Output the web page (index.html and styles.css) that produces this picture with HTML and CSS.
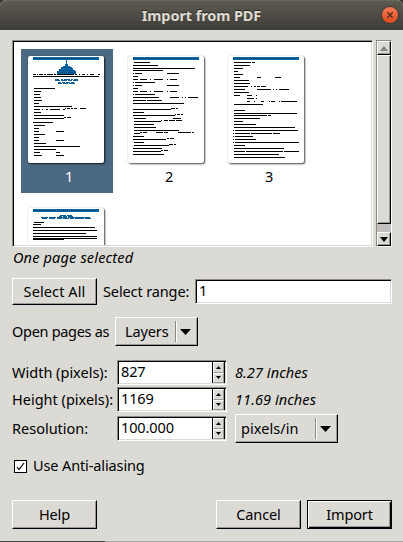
FILE: index.html
```html
<!DOCTYPE html>
<html lang="en">
<head>
<meta charset="utf-8">
<title>Import from PDF</title>
<link rel="stylesheet" href="styles.css">
</head>
<body>
<div class="window">
  <header class="titlebar">
    <h1>Import from PDF</h1>
    <button class="close" aria-label="Close"><svg width="8" height="8" viewBox="0 0 8 8"><path d="M1.3 1.3l5.4 5.4M6.7 1.3L1.3 6.7"/></svg></button>
  </header>
  <main>
    <section class="browser">
      <div class="pages">
        <figure class="page selected">
          <svg class="paper" viewBox="0 0 76 107">
            <path class="blue" d="M5 1h66v3H5zM38 4h1v4h1v2h2v1h2v1h1v2h2v1h1v3H29v-3h2v-2h2v-2h2v-1h2V8h1z"/>
            <path class="dither" d="M5 2.5h66M34 11.5h10M31 14.5h16M30 16.5h18"/>
            <path class="ink" d="M5 18.5h3m1 0h1m1 0h4m1 0h2m1 0h6m1 0h2m1 0h17m1 0h2m2 0h1m2 0h3m2 0h1m2 0h4m4 0h2M5 20.5h66M6 32.5h21M6 35.5h7M6 38.5h6M6 41.5h7M6 44.5h8M6 47.5h5M6 50.5h38M37 52.5h1m1 0h3m1 0h2m1 0h3m3 0h6M6 53.5h6m2 0h1m3 0h2m2 0h10m3 0h2M6 56.5h7M6 59.5h30M36 61.5h2m1 0h4M6 62.5h30M5 66.5h20M6 69.5h11M6 72.5h5M6 75.5h5M28 75.5h8M6 78.5h11M6 81.5h5M6 84.5h5M28 84.5h8M6 87.5h12M6 90.5h46M6 93.5h22M6 96.5h6M28 96.5h4M6 99.5h8M28 99.5h8"/>
            <path class="bluetext" d="M27 23.5h4m2 0h2m1 0h6m1 0h2m1 0h4M27 24.5h5m1 0h6m1 0h4m1 0h5M30 26.5h3m1 0h3m1 0h4m1 0h3M30 27.5h4m1 0h5m1 0h6"/>
          </svg>
          <figcaption>1</figcaption>
        </figure>
        <figure class="page">
          <svg class="paper" viewBox="0 0 76 107">
            <path class="blue" d="M5 1h66v3H5z"/><path class="dither" d="M5 2.5h66"/>
            <path class="ink" d="M6 6.5h16M5 9.5h25M5 12.5h62M5 14.5h30M5 17.5h1m1 0h7M39 17.5h12M5 20.5h5M5 23.5h5m2 0h7m3 0h1m3 0h9m4 0h1m2 0h7M5 26.5h1m1 0h20M5 29.5h1m1 0h7M39 29.5h12M5 32.5h5M5 35.5h5m2 0h7m3 0h1m3 0h9m4 0h1m2 0h7M5 38.5h1m1 0h20M5 41.5h26M42 41.5h9m3 0h1m2 0h1m2 0h10M5 44.5h13m1 0h15M5 47.5h51M43 52.5h4m1 0h2M5 53.5h38M5 56.5h11M47 58.5h1m1 0h3m1 0h2M5 59.5h42M6 62.5h12M45 62.5h8M33 64.5h1m2 0h4m1 0h6m1 0h6M6 65.5h27M6 68.5h20M6 71.5h22M6 74.5h45M12 76.5h2m1 0h4M28 76.5h7m1 0h4M50 76.5h13m1 0h2M6 77.5h6M5 80.5h11M39 82.5h2m1 0h4M5 83.5h33M6 86.5h10M41 88.5h4m1 0h2M6 89.5h35M5 92.5h29M33 94.5h2m1 0h4M5 95.5h28M5 98.5h31"/>
          </svg>
          <figcaption>2</figcaption>
        </figure>
        <figure class="page">
          <svg class="paper" viewBox="0 0 76 107">
            <path class="blue" d="M5 1h66v3H5z"/><path class="dither" d="M5 2.5h66"/>
            <path class="ink" d="M6 6.5h17m1 0h3M6 9.5h16M6 12.5h9M6 15.5h4M6 18.5h9M6 21.5h6M29 21.5h4M47 21.5h6M6 24.5h15M6 27.5h16M6 30.5h14m3 0h1m2 0h2m1 0h3m1 0h5M6 33.5h11M29 33.5h14m2 0h1m2 0h1m2 0h10M6 36.5h15M6 39.5h6M19 39.5h5M28 39.5h1M19 42.5h7m2 0h1M19 45.5h3m4 0h1m6 0h3m5 0h1m1 0h4m4 0h1m1 0h16M6 48.5h29M6 54.5h11M6 57.5h63M6 59.5h33m1 0h3M6 62.5h26M6 65.5h9M6 68.5h22M6 71.5h61M5 74.5h1m1 0h63M5 77.5h1m1 0h15m1 0h21m1 0h7M5 80.5h1m1 0h18M5 83.5h1m1 0h21M5 86.5h1m1 0h64M6 89.5h11M6 92.5h50M6 95.5h11m1 0h37m1 0h15M6 98.5h45M6 101.5h51"/>
          </svg>
          <figcaption>3</figcaption>
        </figure>
        <figure class="page">
          <svg class="paper" viewBox="0 0 76 107">
            <path class="blue" d="M5 1h66v3H5z"/><path class="dither" d="M5 2.5h66"/>
            <path class="bluetext" d="M32 7.5h6m1 0h5M31 8.5h3m1 0h4m1 0h5M13 9.5h7m1 0h7m1 0h10m1 0h22M14 10.5h5m2 0h6m2 0h5m1 0h6m1 0h4m1 0h9m1 0h6"/>
            <path class="ink" d="M6 14.5h10M5 16.5h8M5 19.5h62M5 22.5h64M5 25.5h53M5 28.5h64M5 30.5h64M5 31.5h31"/>
          </svg>
        </figure>
      </div>
      <div class="scrollbar">
        <span class="step"><svg width="8" height="5" viewBox="0 0 8 5"><path fill="#85837d" d="M4 0L8 5H0z"/></svg></span>
        <span class="slider"></span>
        <span class="step"><svg width="8" height="5" viewBox="0 0 8 5"><path d="M0 0h8L4 5z"/></svg></span>
      </div>
    </section>
    <p class="status">One page selected</p>
    <div class="row range">
      <button class="btn">Select All</button>
      <label>Select range:</label>
      <div class="entry">1</div>
    </div>
    <div class="row openas">
      <label>Open pages as</label>
      <div class="combo"><span>Layers</span><i></i><svg width="11" height="6" viewBox="0 0 11 6"><path d="M0 0h11L5.5 6z"/></svg></div>
    </div>
    <div class="fields">
      <label>Width (pixels):</label>
      <div class="entry spin"><span>827</span><div class="arrows"><b><svg viewBox="0 0 5 3"><path d="M0 3h5L2.500 0z"/></svg></b><b><svg viewBox="0 0 5 3"><path d="M0 0h5L2.500 3z"/></svg></b></div></div>
      <em>8.27 inches</em>
      <label>Height (pixels):</label>
      <div class="entry spin"><span>1169</span><div class="arrows"><b><svg viewBox="0 0 5 3"><path d="M0 3h5L2.500 0z"/></svg></b><b><svg viewBox="0 0 5 3"><path d="M0 0h5L2.500 3z"/></svg></b></div></div>
      <em>11.69 inches</em>
      <label>Resolution:</label>
      <div class="entry spin"><span>100.000</span><div class="arrows"><b><svg viewBox="0 0 5 3"><path d="M0 3h5L2.500 0z"/></svg></b><b><svg viewBox="0 0 5 3"><path d="M0 0h5L2.500 3z"/></svg></b></div></div>
      <div class="combo units"><span>pixels/in</span><i></i><svg width="11" height="6" viewBox="0 0 11 6"><path d="M0 0h11L5.500 6z"/></svg></div>
    </div>
    <label class="check"><span class="box"><svg width="9" height="9" viewBox="0 0 9 9"><path d="M1 5l2 2.500L8 1"/></svg></span><span class="text">Use Anti-aliasing</span></label>
    <footer>
      <button class="btn">Help</button>
      <button class="btn cancel">Cancel</button>
      <button class="btn default">Import</button>
    </footer>
  </main>
  <div class="edge"></div>
</div>
</body>
</html>
```

FILE: styles.css
```css
* { box-sizing: border-box; }
body {
  margin: 0;
  background: #35342f;
  font: 14.5px/20px "Noto Sans", "Open Sans", sans-serif;
  letter-spacing: -0.12px;
  color: #000;
}
svg { display: block; }
.window {
  width: 403px;
  height: 542px;
  display: flex;
  flex-direction: column;
  background: #dbdad5;
  border-radius: 6px 6px 0 0;
  overflow: hidden;
}
.titlebar {
  height: 30px;
  flex: none;
  display: grid;
  grid-template-columns: 30px 1fr 30px;
  align-items: center;
  background: linear-gradient(#5d5a50, #3d3c38);
  border-top: 1px solid #6b685d;
}
.titlebar h1 {
  grid-column: 2;
  margin: 0 0 2px;
  text-align: center;
  font-size: 14.5px;
  line-height: 20px;
  font-weight: 700;
  letter-spacing: -0.1px;
  color: #dfdbd2;
  text-shadow: 0 -1px 0 #2b2a27;
}
.close {
  width: 16px;
  height: 16px;
  padding: 0;
  margin: 0 0 1px 9px;
  display: flex;
  align-items: center;
  justify-content: center;
  border: 0;
  border-radius: 50%;
  background: linear-gradient(#f57b55, #dd4a1b);
  box-shadow: 0 0 0 1px #39362f;
}
.close svg { fill: none; stroke: #4a2b1d; stroke-width: 1.3; }
main {
  flex: 1;
  padding: 10px 11px 0 12px;
  display: flex;
  flex-direction: column;
}
.browser { display: flex; gap: 3px; height: 207px; }
.pages, .entry {
  background: #fff;
  border: 1px solid;
  border-color: #8d8b84 #fff #fff #8d8b84;
  box-shadow: inset 1px 1px 0 #000, inset -1px -1px 0 #dbdad5;
}
.pages {
  width: 361px;
  padding: 8px 0 0 8px;
  display: grid;
  grid-template-columns: repeat(3, 92px);
  grid-auto-rows: 144px;
  gap: 8px;
  overflow: hidden;
  position: relative;
}
.pages::after {
  content: "";
  position: absolute;
  inset: auto 0 0 1px;
  height: 1px;
  background: #dbdad5;
}
.page { margin: 0; padding: 7px 7px 0; text-align: center; }
.page.selected { background: #4b6983; color: #fff; }
.paper {
  width: 76px;
  height: 107px;
  background: #fff;
  border-radius: 2px;
  box-shadow: 0 0 1px #0003, 1px 1px 2px #000b;
  shape-rendering: crispEdges;
}
.paper path { fill: none; }
.paper .blue { fill: #0c64a4; }
.paper .dither { stroke: #06416f; stroke-dasharray: 1 1; }
.paper .ink { stroke: #000; }
.paper .bluetext { stroke: #0c5c98; }
.page figcaption { width: 84px; margin-top: 3px; margin-left: -1px; }
.scrollbar {
  width: 16px;
  display: flex;
  flex-direction: column;
  background: #c1c0bc;
  border-left: 1px solid #8d8b84;
  border-top: 1px solid #8d8b84;
  border-bottom: 1px solid #fff;
  border-right: 1px solid #fff;
}
.step, .slider, .btn, .combo {
  background: #dbdad5;
  border: 1px solid;
  border-color: #fff #000 #000 #fff;
  box-shadow: inset -1px -1px 0 #9a9890;
}
.step { height: 14px; display: flex; align-items: center; justify-content: center; }
.slider { height: 169px; margin-bottom: 8px; }
.status { margin: 0 0 0 1px; height: 20px; font-style: italic; letter-spacing: 0.17px; }
.row { display: flex; align-items: center; }
.range { height: 27px; margin-top: 11px; }
.range .btn { height: 27px; letter-spacing: 0.1px; }
.range label { width: 98px; padding-left: 6px; }
.range .entry { flex: 1; height: 25px; }
.btn {
  width: 85px;
  height: 29px;
  padding: 0 0 2px;
  font: inherit;
  letter-spacing: inherit;
  color: inherit;
}
label { padding-bottom: 2px; }
.entry { line-height: 21px; padding-left: 3px; }
.openas { margin-top: 12px; height: 29px; }
.openas label { width: 103px; letter-spacing: -0.3px; }
.combo {
  width: 83px;
  height: 29px;
  padding: 0 6px 0 9px;
  display: flex;
  align-items: center;
}
.combo span { padding-bottom: 2px; }
.combo i {
  width: 2px;
  height: 21px;
  margin: 0 3px 0 auto;
  border-left: 1px solid #8d8b84;
  border-right: 1px solid #fff;
}
.fields {
  margin-top: 12px;
  display: grid;
  grid-template-columns: 105px 110px 103px;
  grid-template-rows: 29px 25px 33px;
  align-items: center;
}
.fields label { letter-spacing: 0; }
.fields em { letter-spacing: 0.08px; padding-bottom: 2px; }
.fields em, .units { margin-left: 8px; }
.fields .combo.units { width: 103px; padding-left: 5px; letter-spacing: 0.05px; }
.spin { height: 25px; display: flex; padding: 1px 1px 1px 3px; }
.spin span { flex: 1; line-height: 19px; }
.arrows {
  width: 13px;
  display: flex;
  flex-direction: column;
  border-left: 1px solid #000;
  border-right: 1px solid #000;
}
.arrows b {
  flex: 1;
  display: flex;
  align-items: center;
  justify-content: center;
  background: #dbdad5;
  border: 1px solid;
  border-color: #fff #9a9890 #9a9890 #fff;
}
.arrows svg { width: 5px; height: 3px; }
.check { display: flex; align-items: center; gap: 6px; height: 20px; padding: 0; margin: 11px 0 0 2px; }
.check .text { padding-bottom: 2px; }
.box {
  width: 13px;
  height: 13px;
  background: #fff;
  border: 1px solid #000;
  display: flex;
  align-items: center;
  justify-content: center;
}
.box svg { fill: none; stroke: #000; stroke-width: 1.2; }
footer { display: flex; gap: 6px; margin-top: 24px; }
footer .cancel { margin-left: auto; }
.btn.default { border-color: #000; box-shadow: inset 1px 1px 0 #fff, inset -1px -1px 0 #000, inset -2px -2px 0 #9a9890; }
.edge { height: 1px; flex: none; background: linear-gradient(90deg, #474743 105px, #aaa9a5 105px); }
```
